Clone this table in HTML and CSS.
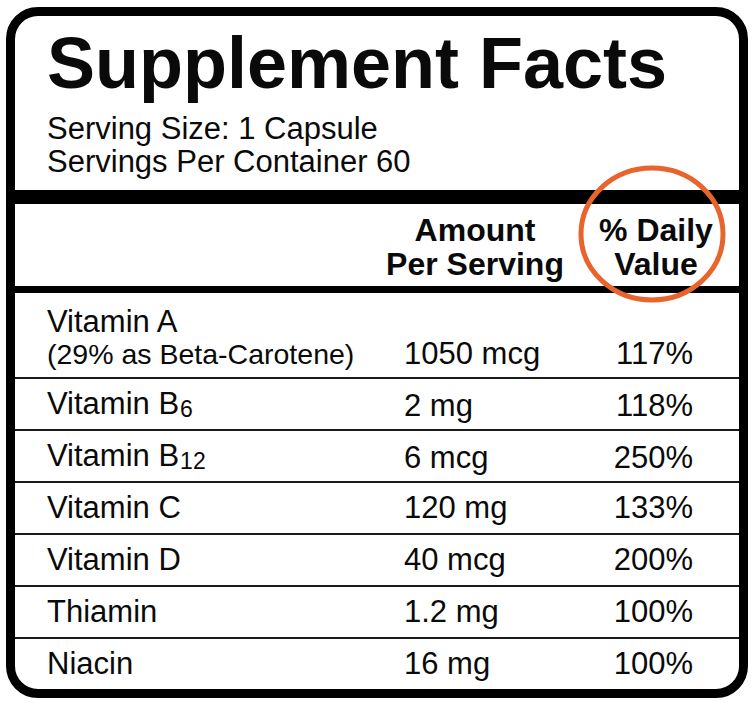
FILE: index.html
```html
<!DOCTYPE html>
<html lang="en">
<head>
<meta charset="utf-8">
<title>Supplement Facts</title>
<link rel="stylesheet" href="styles.css">
</head>
<body>
<div class="label">
  <div class="top">
    <h1 class="title">Supplement Facts</h1>
    <p class="serving">Serving Size: 1 Capsule<br>Servings Per Container 60</p>
  </div>
  <div class="bar"></div>
  <div class="head">
    <div class="head-amount">Amount<br>Per Serving</div>
    <div class="head-dv">% Daily<br>Value</div>
  </div>
  <div class="rows">
    <div class="row row-tall">
      <div class="name">Vitamin A<br><span class="note">(29% as Beta-Carotene)</span></div>
      <div class="amt">1050 mcg</div>
      <div class="dv">117%</div>
    </div>
    <div class="row">
      <div class="name">Vitamin B<span class="sub">6</span></div>
      <div class="amt">2 mg</div>
      <div class="dv">118%</div>
    </div>
    <div class="row">
      <div class="name">Vitamin B<span class="sub">12</span></div>
      <div class="amt">6 mcg</div>
      <div class="dv">250%</div>
    </div>
    <div class="row">
      <div class="name">Vitamin C</div>
      <div class="amt">120 mg</div>
      <div class="dv">133%</div>
    </div>
    <div class="row">
      <div class="name">Vitamin D</div>
      <div class="amt">40 mcg</div>
      <div class="dv">200%</div>
    </div>
    <div class="row">
      <div class="name">Thiamin</div>
      <div class="amt">1.2 mg</div>
      <div class="dv">100%</div>
    </div>
    <div class="row">
      <div class="name">Niacin</div>
      <div class="amt">16 mg</div>
      <div class="dv">100%</div>
    </div>
  </div>
  <svg class="ring" width="170" height="160" viewBox="0 0 170 160" aria-hidden="true">
    <ellipse cx="85" cy="80" rx="71" ry="66" fill="none" stroke="#e8642c" stroke-width="5"/>
  </svg>
</div>
</body>
</html>
```

FILE: styles.css
```css
html, body {
  margin: 0;
  padding: 0;
  background: #ffffff;
}

body {
  font-family: "Liberation Sans", Arial, Helvetica, sans-serif;
  color: #0a0a0a;
}

.label {
  position: relative;
  box-sizing: border-box;
  width: 742px;
  height: 691px;
  margin: 7px 0 0 6px;
  border: 9px solid #000;
  border-radius: 32px;
  background: #fff;
  overflow: hidden;
}

.top {
  padding: 11px 0 12px 32px;
}

.title {
  margin: 0;
  font-size: 72px;
  line-height: 72px;
  font-weight: 700;
}

.serving {
  margin: 13px 0 0;
  font-size: 31px;
  line-height: 33px;
}

.bar {
  height: 14px;
  background: #000;
}

.head {
  display: flex;
  justify-content: flex-end;
  gap: 20px;
  height: 73px;
  padding: 9px 17px 0 0;
  border-bottom: 7px solid #000;
  font-weight: 700;
  font-size: 32px;
  line-height: 34px;
  text-align: center;
}

.head-amount {
  width: 190px;
}

.head-dv {
  width: 132px;
}

.row {
  display: grid;
  grid-template-columns: 357px 1fr auto;
  align-items: end;
  height: 50px;
  padding: 0 46px 0 32px;
  border-top: 2px solid #1a1a1a;
  font-size: 31px;
  line-height: 50px;
}

.row-tall {
  height: 77px;
  padding-bottom: 7px;
  border-top: 0;
  line-height: 32px;
}

.note {
  font-size: 28.5px;
}

.dv {
  text-align: right;
}

.sub {
  font-size: 23px;
  position: relative;
  top: 3px;
  margin-left: 1px;
}

.ring {
  position: absolute;
  left: 552px;
  top: 138px;
}
```
